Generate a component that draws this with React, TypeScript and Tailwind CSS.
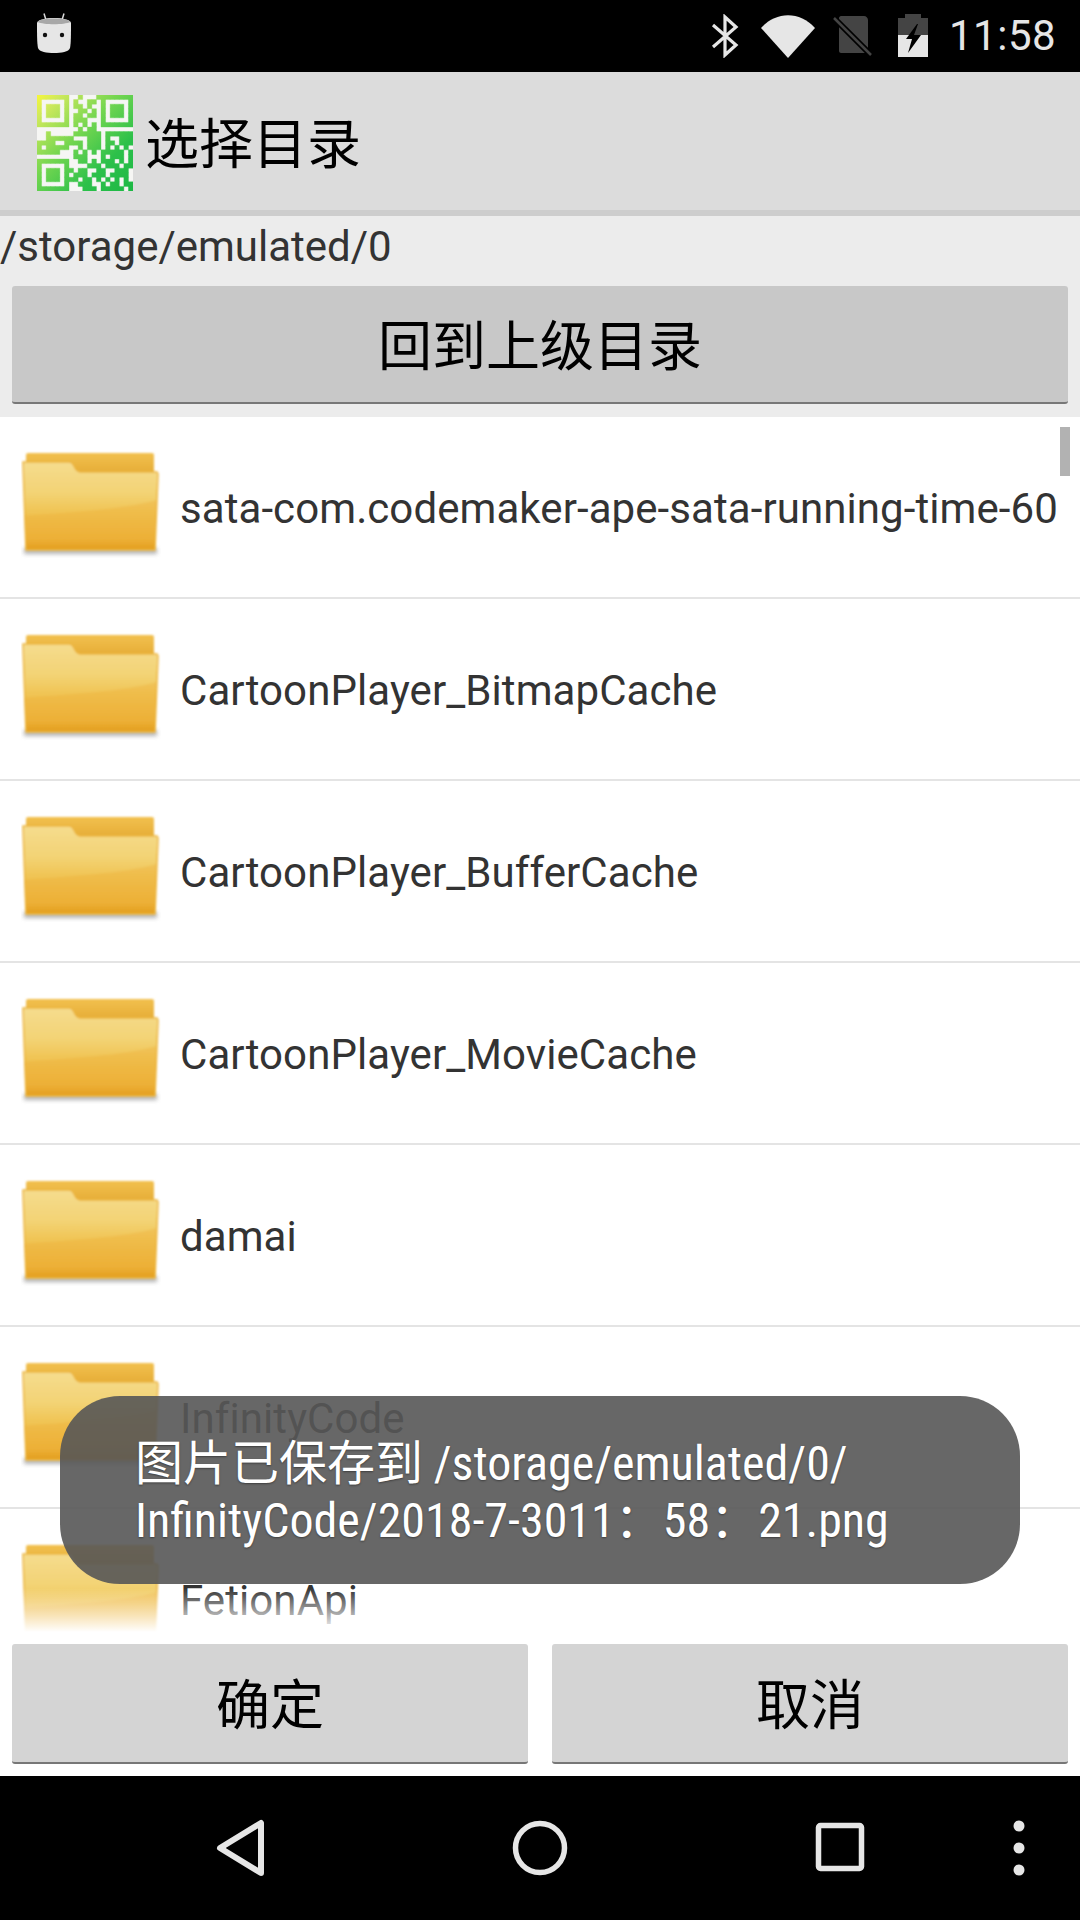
import React from 'react';

const FOLDERS = [
  'sata-com.codemaker-ape-sata-running-time-60',
  'CartoonPlayer_BitmapCache',
  'CartoonPlayer_BufferCache',
  'CartoonPlayer_MovieCache',
  'damai',
  'InfinityCode',
  'FetionApi',
];

const LATIN = '"Roboto", "Noto Sans CJK SC", sans-serif';

// 21x21 code drawn on the app icon
const QR = [
  '#######..#...########',
  '#.....#.#..##.#.....#',
  '#.###.#.##.#..#.###.#',
  '#.###.#..##.#.#.###.#',
  '#.###.#.##.##.#.###.#',
  '#.....#.###...#.....#',
  '#######.#.#.#.#######',
  '.........#.##........',
  '..#.....######.######',
  '..######...###.#..###',
  '####..####.###.##.###',
  '#.#####..#.###.#.#.#.',
  '#####...#.#.#.#####.#',
  '........###...#.###.#',
  '#######..##.#.###.#.#',
  '#.....#....###.###.##',
  '#.###.##.##..##..###.',
  '#.###.#.###.###.####.',
  '#.###.###.##.#.#.#.#.',
  '#.....#..###..#.##.##',
  '#######...###.#####.#',
];

const qrPath = QR.map((row, y) =>
  row
    .split('')
    .map((c, x) => (c === '#' ? `M${x} ${y}h1v1h-1z` : ''))
    .join('')
).join('');

const AppIcon = () => (
  <svg width="96" height="96" viewBox="0 0 21 21" className="mt-[4px] shrink-0">
    <defs>
      <linearGradient id="qrg" gradientUnits="userSpaceOnUse" x1="0" y1="0" x2="21" y2="21">
        <stop offset="0" stopColor="#f6f73a" />
        <stop offset="0.12" stopColor="#cfe95c" />
        <stop offset="0.42" stopColor="#74d650" />
        <stop offset="0.72" stopColor="#2cc04a" />
        <stop offset="1" stopColor="#1db845" />
      </linearGradient>
    </defs>
    <rect width="21" height="21" rx="0.7" fill="#f6f6f4" />
    <path d={qrPath} fill="url(#qrg)" stroke="url(#qrg)" strokeWidth="0.08" />
  </svg>
);

const FolderIcon = () => (
  <svg width="140" height="110" viewBox="0 0 140 110" className="shrink-0">
    <defs>
      <linearGradient id="ffront" x1="0" y1="0" x2="0" y2="1">
        <stop offset="0" stopColor="#f5dc8e" />
        <stop offset="0.35" stopColor="#f3d375" />
        <stop offset="0.6" stopColor="#f0c250" />
        <stop offset="0.88" stopColor="#ecb035" />
        <stop offset="1" stopColor="#dc9410" />
      </linearGradient>
      <linearGradient id="fback" x1="0" y1="0" x2="0" y2="1">
        <stop offset="0" stopColor="#f2c04e" />
        <stop offset="1" stopColor="#d99a20" />
      </linearGradient>
      <filter id="fsoft" x="-10%" y="-10%" width="120%" height="120%">
        <feGaussianBlur stdDeviation="0.9" />
      </filter>
      <filter id="fshadow" x="-10%" y="-200%" width="120%" height="500%">
        <feGaussianBlur stdDeviation="2" />
      </filter>
    </defs>
    <rect x="3" y="98" width="133" height="6" fill="#777777" opacity="0.55" filter="url(#fshadow)" />
    <g filter="url(#fsoft)">
      <rect x="5" y="3" width="128" height="40" rx="2" fill="url(#fback)" />
      <path
        d="M2 12H48C51 12 52 14 54 18C55.500 21 57 22 60 22H136L137 24L134 100H5L2 14Z"
        fill="url(#ffront)"
        stroke="#ecb53c"
        strokeWidth="1.500"
      />
      <path d="M3 66C50 62 100 60 136 50L134 100H5Z" fill="#eeb038" opacity="0.35" />
    </g>
  </svg>
);

const StatusBar = () => (
  <div className="flex h-[72px] shrink-0 items-center bg-black pl-[36px]">
    <svg width="36" height="40" viewBox="0 0 36 40" className="mb-[6px] shrink-0">
      <path d="M8 0.500L10 7M28 0.500L26 7" stroke="#d8d8d8" strokeWidth="1.500" fill="none" />
      <path d="M1 10C1 7 9 5 18 5C27 5 35 7 35 10C35 20 35 30 34 35C33 39 25 40 18 40C11 40 3 39 2 35C1 30 1 20 1 10Z" fill="#e6e6e6" />
      <path d="M1.500 9C3 6.500 10 5.500 18 5.500C26 5.500 33 6.500 34.500 9C28 12 8 12 1.500 9Z" fill="#a8a8a8" />
      <circle cx="9" cy="22" r="2.200" fill="#111" />
      <circle cx="26" cy="22" r="2.200" fill="#111" />
    </svg>
    <svg width="28" height="44" viewBox="0 0 28 44" className="ml-[639px] shrink-0">
      <path d="M2 11L25 31L14 41V3L25 13L2 33" fill="none" stroke="#e6e6e6" strokeWidth="3.200" />
    </svg>
    <svg width="54" height="44" viewBox="0 0 54 44" className="ml-[22px] shrink-0">
      <path d="M0 14C15 -3 39 -3 54 14L27 44Z" fill="#e6e6e6" />
    </svg>
    <svg width="40" height="42" viewBox="0 0 40 42" className="ml-[18px] shrink-0">
      <path d="M6 3C6 2 7 1 8 1H31C33 1 35 3 35 5V36C35 37 34 38 33 38H8C7 38 6 37 6 36Z" fill="#444" />
      <path d="M1 3L38 40" stroke="#000" strokeWidth="6" />
      <path d="M1 3L38 40" stroke="#444" strokeWidth="2.500" />
    </svg>
    <svg width="30" height="44" viewBox="0 0 30 44" className="ml-[25px] shrink-0">
      <path d="M7 0H23V4H30V21H0V4H7Z" fill="#444" />
      <path d="M0 21H30V43H0Z" fill="#e6e6e6" />
      <path d="M19 10L8 25H14L10 39L23 21H16L20 10Z" fill="#000" />
    </svg>
    <span
      className="ml-[21px] text-[42px] leading-none tracking-[0.5px] text-[#e6e6e6]"
      style={{ fontFamily: LATIN }}
    >
      11:58
    </span>
  </div>
);

const NavBar = () => (
  <div className="flex h-[144px] shrink-0 items-center bg-black pl-[214px]">
    <svg width="54" height="62" viewBox="0 0 54 62" className="shrink-0">
      <path d="M6 31L47 6V56Z" fill="none" stroke="#e6e6e6" strokeWidth="6" strokeLinejoin="round" />
    </svg>
    <svg width="56" height="56" viewBox="0 0 56 56" className="ml-[244px] shrink-0">
      <circle cx="28" cy="28" r="24.500" fill="none" stroke="#e6e6e6" strokeWidth="5.500" />
    </svg>
    <svg width="52" height="52" viewBox="0 0 52 52" className="ml-[246px] shrink-0">
      <rect x="4.500" y="3.500" width="43" height="43" rx="2" fill="none" stroke="#e6e6e6" strokeWidth="5.500" />
    </svg>
    <svg width="12" height="56" viewBox="0 0 12 56" className="ml-[147px] shrink-0">
      <circle cx="6" cy="6" r="5.500" fill="#e6e6e6" />
      <circle cx="6" cy="28" r="5.500" fill="#e6e6e6" />
      <circle cx="6" cy="50" r="5.500" fill="#e6e6e6" />
    </svg>
  </div>
);

const GreyButton = ({ label, className }: { label: string; className: string }) => (
  <div
    className={`flex items-center justify-center rounded-[3px] border-b-2 border-[#777777] pb-[3px] text-[54px] leading-none text-black ${className}`}
  >
    {label}
  </div>
);

export default function App() {
  return (
    <div
      className="relative flex h-[1920px] w-[1080px] flex-col overflow-hidden bg-white"
      style={{ fontFamily: '"Noto Sans CJK SC", sans-serif' }}
    >
      <StatusBar />

      <div className="flex h-[138px] shrink-0 items-center bg-[#dcdcdc] pl-[37px]">
        <AppIcon />
        <span className="ml-[12px] text-[54px] leading-none text-black">选择目录</span>
      </div>
      <div className="h-[6px] shrink-0 bg-[#cdcdcd]" />

      <div className="flex h-[201px] shrink-0 flex-col bg-[#ececec] px-[12px] pb-[13px]">
        <div
          className="-ml-[12px] mb-[8px] flex h-[62px] items-center text-[42px] leading-none text-[#333333]"
          style={{ fontFamily: LATIN }}
        >
          /storage/emulated/0
        </div>
        <GreyButton label="回到上级目录" className="h-[118px] bg-[#c8c8c8]" />
      </div>

      <div className="relative min-h-0 flex-1 overflow-hidden">
        {FOLDERS.map(name => (
          <div
            key={name}
            className="flex h-[182px] items-center border-b-2 border-[#e4e4e4] pl-[21px] pb-[4px]"
          >
            <FolderIcon />
            <span
              className="ml-[19px] mt-[8px] whitespace-nowrap text-[42px] leading-none tracking-[0.08px] text-[#333333]"
              style={{ fontFamily: LATIN }}
            >
              {name}
            </span>
          </div>
        ))}
        <div className="absolute right-[10px] top-[10px] h-[49px] w-[10px] bg-[#b2b2b2]" />
        <div className="absolute bottom-0 left-0 right-0 h-[44px] bg-gradient-to-b from-white/0 to-white" />
      </div>

      <div className="flex h-[144px] shrink-0 gap-[24px] bg-white px-[12px] pt-[12px] pb-[12px]">
        <GreyButton label="确定" className="flex-1 bg-[#d4d4d4]" />
        <GreyButton label="取消" className="flex-1 bg-[#d4d4d4]" />
      </div>

      <NavBar />

      <div className="absolute left-[60px] top-[1396px] flex h-[188px] w-[960px] flex-col justify-center rounded-[60px] bg-[rgba(87,87,87,0.9)] pl-[75px] pb-[1px] text-[48px] leading-[57px] text-white [text-shadow:0_1px_2px_rgba(0,0,0,0.4)]">
        <div className="whitespace-nowrap">
          图片已保存到{' '}
          <span className="[font-stretch:75%]" style={{ fontFamily: LATIN }}>
            /storage/emulated/0/
          </span>
        </div>
        <div className="whitespace-nowrap [font-stretch:75%]" style={{ fontFamily: LATIN }}>
          InfinityCode/2018-7-3011：58：21.png
        </div>
      </div>
    </div>
  );
}
